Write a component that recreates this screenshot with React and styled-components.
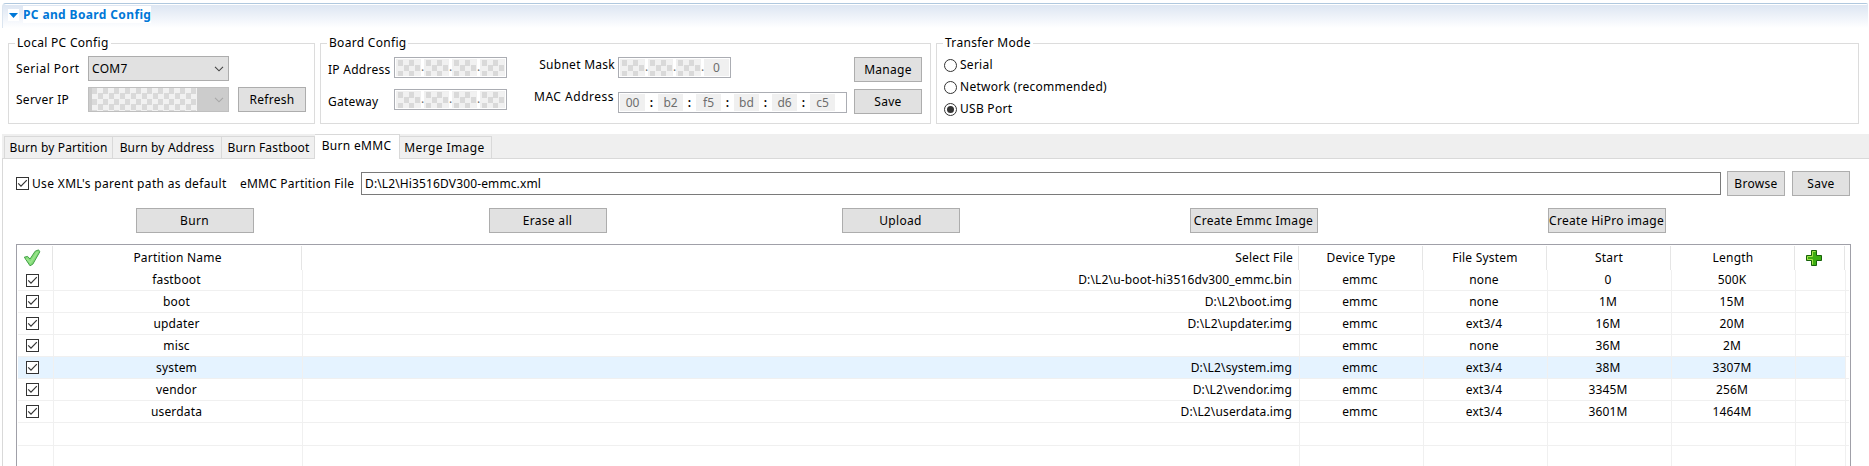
import React from "react";
import styled, { createGlobalStyle, css } from "styled-components";

const Global = createGlobalStyle`
  *{box-sizing:border-box}
  html,body{margin:0;background:#fff;overflow:hidden}
  body{font:12px/16px "Noto Sans","Open Sans",sans-serif;color:#000;width:1869px;height:466px}
`;
const Page = styled.div`width:1869px;height:466px;overflow:hidden;display:flex;flex-direction:column;background:#fff;`;
const SectionHead = styled.header`
  flex:none;margin:3px 1px 0 2px;height:25px;padding:2px 0 0 5px;display:flex;align-items:flex-start;
  border-top:1px solid #b0c8de;border-left:1px solid #dbe5f0;border-top-left-radius:4px;border-top-right-radius:2px;
  background:linear-gradient(#fff 0 1px,#dde6f2 1px,#f3f6fb 16px,#fff 24px);
`;
const Twistie = styled.span`width:11px;height:12px;margin-top:3px;background:#fff;display:flex;align-items:center;justify-content:center;`;
const Title = styled.h1`
  margin:0 0 0 4px;height:17px;font-size:12px;line-height:17px;font-weight:700;color:#0078d7;background:#fff;
  letter-spacing:.37px;white-space:nowrap;
`;
const Label = styled.span`
  flex:none;white-space:nowrap;letter-spacing:${p => p.$ls ?? 0.27}px;line-height:16px;
  ${p => p.$w && css`width:${p.$w}px;`}
  ${p => p.$right && css`text-align:right;margin-right:${p.$mr ?? 4}px;`}
  ${p => p.$up && css`margin-bottom:${p.$up}px;`}
  ${p => p.$down && css`margin-top:${p.$down}px;`}
`;
const ComboValue = styled(Label)`color:#000;`;
const Groups = styled.div`flex:none;display:flex;gap:5px;padding:7px 0 0 8px;height:106px;`;
const Group = styled.fieldset`
  flex:none;margin:0;min-width:0;width:${p => p.$w}px;height:89px;border:1px solid #dcdcdc;padding:0 0 0 7px;
`;
const Legend = styled.legend`padding:0 2px;margin-left:-1px;height:16px;line-height:16px;letter-spacing:.3px;`;
const Lines = styled.div`display:flex;flex-direction:column;gap:${p => p.$gap || 0}px;padding-top:${p => p.$top || 0}px;`;
const ButtonLines = styled(Lines)`margin-left:7px;`;
const Line = styled.div`display:flex;align-items:center;height:${p => p.$h || 25}px;`;
const Columns = styled.div`display:flex;align-items:flex-start;`;
const Button = styled.button`
  flex:none;width:${p => p.$w || 68}px;height:25px;padding:0;border:1px solid #adadad;background:#e1e1e1;
  font:inherit;color:#000;letter-spacing:.3px;white-space:nowrap;margin-left:${p => p.$ml || 0}px;
`;
const Combo = styled.div`
  flex:none;width:141px;height:25px;display:flex;align-items:center;justify-content:space-between;padding:0 4px 0 3px;
  border:1px solid ${p => (p.$off ? "#bfbfbf" : "#adadad")};background:${p => (p.$off ? "#ccc" : "#e1e1e1")};
  color:${p => (p.$off ? "#a8a8a8" : "#444")};
`;
const Mask = styled.span`
  flex:none;width:${p => p.$w}px;height:${p => p.$h}px;
  background:conic-gradient(#f1f1f1 25%,#d9d9d9 0 50%,#f1f1f1 0 75%,#d9d9d9 0) 0 0/11px 11px;
`;
const Field = styled.div`
  flex:none;display:flex;align-items:center;width:${p => p.$w || 113}px;height:21px;border:1px solid #abadb3;padding-left:1px;background:#fff;
`;
const Octet = styled.span`
  flex:none;width:25px;height:17px;background:#f0f0f0;display:flex;align-items:center;justify-content:center;color:#6d6d6d;
`;
const Dot = styled.span`flex:none;width:3px;height:13px;display:flex;align-items:flex-end;color:#6d6d6d;line-height:14px;`;
const Colon = styled.span`flex:none;width:13px;text-align:center;font-weight:600;`;
const Radio = styled.span`
  width:13px;height:13px;border:1px solid #333;border-radius:50%;margin-right:3px;display:flex;align-items:center;justify-content:center;
  &::after{content:"";width:7px;height:7px;border-radius:50%;background:${p => (p.$on ? "#333" : "transparent")};}
`;
const TabBar = styled.nav`
  flex:none;height:25px;margin-left:2px;padding-left:2px;display:flex;align-items:flex-end;background:#efefef;
  border-bottom:1px solid #d9d9d9;
`;
const Tab = styled.div`
  flex:none;width:${p => p.$w}px;height:22px;border:1px solid #d9d9d9;border-bottom:0;border-left-width:${p => (p.$first ? 1 : 0)}px;
  display:flex;align-items:center;justify-content:center;letter-spacing:${p => p.$ls ?? 0.15}px;white-space:nowrap;
  background:#f0f0f0;padding:1px ${p => p.$pr || 0}px 0 ${p => p.$pl || 0}px;
  ${p => p.$active && css`height:25px;margin-bottom:-1px;background:#fff;padding-bottom:4px;`}
`;
const Pane = styled.main`flex:1;margin-left:2px;border-left:1px solid #d9d9d9;padding:12px 0 0 13px;display:flex;flex-direction:column;min-height:0;`;
const FileRow = styled.div`flex:none;display:flex;align-items:center;height:25px;`;
const CheckText = styled(Label)`width:211px;padding-left:3px;`;
const Check = styled.span`flex:none;width:13px;height:13px;border:1px solid #333;background:#fff;display:flex;`;
const Path = styled.div`
  flex:none;width:1360px;height:23px;margin:0 6px 0 0;border:1px solid #7a7a7a;padding-left:3px;line-height:21px;
  letter-spacing:.13px;
`;
const Actions = styled.div`flex:none;display:grid;grid-template-columns:repeat(5,353px);justify-items:center;padding:12px 0 11px 2px;`;
const Table = styled.section`
  flex:1;width:1835px;border:1px solid #a0a0a8;border-bottom:0;padding:1px 1px 0 1px;overflow:hidden;
`;
const columns = first => css`grid-template-columns:${first}px 249px 997px 124px 124px 124px 124px 50px;`;
const HeadRow = styled.div`display:grid;${columns(35)} height:24px;`;
const Row = styled.div`
  display:grid;${columns(36)} height:${p => p.$h || 22}px;border-bottom:1px solid #f0f0f0;
  ${p => p.$selected && css`background:linear-gradient(90deg,#e5f3ff 1828px,#fff 0);`}
`;
const Cell = styled.div`
  display:flex;align-items:center;justify-content:${p => (p.$right ? "flex-end" : "center")};
  border-right:1px solid ${p => (p.$head ? "#e5e5e5" : "#f0f0f0")};white-space:nowrap;
  letter-spacing:${p => p.$ls ?? (p.$head ? 0.2 : 0.15)}px;
  padding-right:${p => p.$shift ?? (p.$right ? (p.$head ? 5 : 7) : p.$head ? 0 : 3)}px;
  padding-left:${p => p.$pl || 0}px;
`;

const Tick = () => (
  <Check><svg width="11" height="11" viewBox="0 0 11 11"><path d="M1.2 5.3L4 8.2L9.8 2.2" fill="none" stroke="#333" strokeWidth="1.2" /></svg></Check>
);
const Chevron = () => (
  <svg width="10" height="6" viewBox="0 0 10 6"><path d="M1 .8L5 4.8L9 .8" fill="none" stroke="currentColor" strokeWidth="1.1" /></svg>
);
const GreenCheck = () => (
  <svg width="18" height="18" viewBox="0 0 18 18">
    <path d="M1.3 8.2L4.6 7.4L7 10L12.2 2.2L15.6 .9L16.8 2.8L9.8 15.2L7 16.8Z" fill="#84dc78" stroke="#43a047" strokeWidth="1" strokeLinejoin="round" />
    <path d="M3.4 9.4L7.4 13.6L14.4 3.2" fill="none" stroke="#9be58e" strokeWidth="1.4" />
  </svg>
);
const GreenPlus = () => (
  <svg width="16" height="16" viewBox="0 0 16 16">
    <path d="M5.5 .5H10.5V5.5H15.5V10.5H10.5V15.5H5.5V10.5H.5V5.5H5.5Z" fill="#3cae12" stroke="#17620b" />
    <path d="M6.5 14.5V9.5H1.5V6.5H6.5V1.5H9.5" fill="none" stroke="#a5e04c" />
  </svg>
);
const MaskedIp = ({ last }) => (
  <Field>
    {[0, 1, 2, 3].map(i => (
      <React.Fragment key={i}>
        {i > 0 && <Dot>.</Dot>}
        <Octet>{last && i === 3 ? last : <Mask $w={22} $h={16} />}</Octet>
      </React.Fragment>
    ))}
  </Field>
);
const MacField = ({ parts }) => (
  <Field $w={229}>
    {parts.map((part, i) => (
      <React.Fragment key={part}>
        {i > 0 && <Colon>:</Colon>}
        <Octet>{part}</Octet>
      </React.Fragment>
    ))}
  </Field>
);

const rows = [
  ["fastboot", "D:\\L2\\u-boot-hi3516dv300_emmc.bin", "none", "0", "500K"],
  ["boot", "D:\\L2\\boot.img", "none", "1M", "15M"],
  ["updater", "D:\\L2\\updater.img", "ext3/4", "16M", "20M"],
  ["misc", "", "none", "36M", "2M"],
  ["system", "D:\\L2\\system.img", "ext3/4", "38M", "3307M"],
  ["vendor", "D:\\L2\\vendor.img", "ext3/4", "3345M", "256M"],
  ["userdata", "D:\\L2\\userdata.img", "ext3/4", "3601M", "1464M"],
];
const EmptyRow = ({ h }) => <Row $h={h}>{Array.from({ length: 8 }, (_, i) => <Cell key={i} />)}</Row>;

export default function App() {
  return (
    <Page>
      <Global />
      <SectionHead>
        <Twistie><svg width="9" height="5" viewBox="0 0 9 5"><path d="M0 0H9L4.5 5Z" fill="#0078d7" /></svg></Twistie>
        <Title>PC and Board Config</Title>
      </SectionHead>
      <Groups>
        <Group $w={307}>
          <Legend>Local PC Config</Legend>
          <Lines $top={5} $gap={6}>
            <Line><Label $w={72} $ls={0.5}>Serial Port</Label><Combo><ComboValue $ls={0.3}>COM7</ComboValue><Chevron /></Combo></Line>
            <Line><Label $w={72}>Server IP</Label><Combo $off><Mask $w={105} $h={23} /><Chevron /></Combo><Button $ml={9}>Refresh</Button></Line>
          </Lines>
        </Group>
        <Group $w={611}>
          <Legend>Board Config</Legend>
          <Columns>
            <Lines $top={6} $gap={11}>
              <Line $h={21}><Label $w={66} $down={4}>IP Address</Label><MaskedIp /></Line>
              <Line $h={21}><Label $w={66} $down={4}>Gateway</Label><MaskedIp /></Line>
            </Lines>
            <Lines $top={6} $gap={14}>
              <Line $h={21}><Label $w={108} $right $mr={3} $up={5}>Subnet Mask</Label><MaskedIp last="0" /></Line>
              <Line $h={21}><Label $w={107} $right $up={12} $ls={0.5}>MAC Address</Label><MacField parts={["00", "b2", "f5", "bd", "d6", "c5"]} /></Line>
            </Lines>
            <ButtonLines $top={6} $gap={7}>
              <Button>Manage</Button>
              <Button>Save</Button>
            </ButtonLines>
          </Columns>
        </Group>
        <Group $w={923}>
          <Legend>Transfer Mode</Legend>
          <Lines $top={3}>
            <Line $h={22}><Radio /><Label>Serial</Label></Line>
            <Line $h={22}><Radio /><Label>Network (recommended)</Label></Line>
            <Line $h={22}><Radio $on /><Label>USB Port</Label></Line>
          </Lines>
        </Group>
      </Groups>
      <TabBar>
        <Tab $first $w={109}>Burn by Partition</Tab><Tab $w={109}>Burn by Address</Tab><Tab $w={93} $pl={1}>Burn Fastboot</Tab>
        <Tab $active $w={85} $pr={1} $ls={0.3}>Burn eMMC</Tab><Tab $w={92} $pr={2} $ls={0.4}>Merge Image</Tab>
      </TabBar>
      <Pane>
        <FileRow>
          <Tick /><CheckText $ls={0.34}>Use XML's parent path as default</CheckText>
          <Label $w={121} $ls={0.22}>eMMC Partition File</Label><Path>D:\L2\Hi3516DV300-emmc.xml</Path>
          <Button $w={58}>Browse</Button><Button $w={58} $ml={7}>Save</Button>
        </FileRow>
        <Actions><Button $w={118}>Burn</Button><Button $w={118}>Erase all</Button><Button $w={118}>Upload</Button><Button $w={128}>Create Emmc Image</Button><Button $w={118}>Create HiPro image</Button></Actions>
        <Table>
          <HeadRow>
            <Cell $head $shift={7}><GreenCheck /></Cell><Cell $head $pl={1}>Partition Name</Cell><Cell $head $right>Select File</Cell><Cell $head $pl={1}>Device Type</Cell>
            <Cell $head $pl={1}>File System</Cell><Cell $head $pl={1}>Start</Cell><Cell $head $pl={1}>Length</Cell><Cell $head $shift={12}><GreenPlus /></Cell>
          </HeadRow>
          {rows.map((r, i) => (
            <Row key={r[0]} $h={i ? 22 : 21} $selected={i === 4}>
              <Cell $shift={6}><Tick /></Cell><Cell>{r[0]}</Cell><Cell $right>{r[1]}</Cell><Cell>emmc</Cell><Cell>{r[2]}</Cell><Cell>{r[3]}</Cell><Cell>{r[4]}</Cell><Cell />
            </Row>
          ))}
          <EmptyRow h={23} />
          <EmptyRow h={23} />
        </Table>
      </Pane>
    </Page>
  );
}
